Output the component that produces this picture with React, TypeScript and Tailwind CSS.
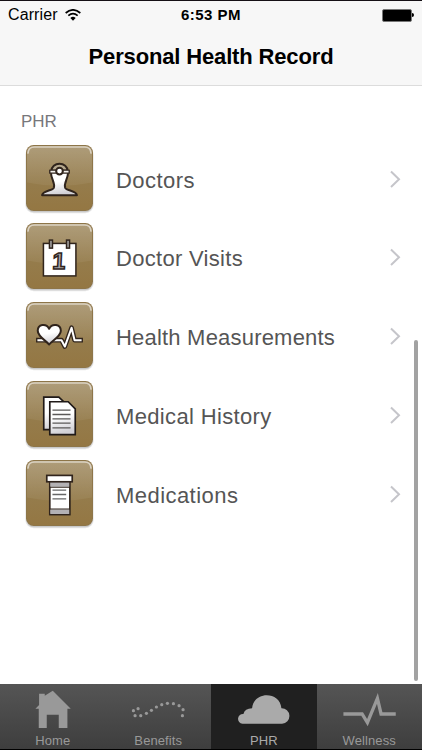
import React from "react";

const DoctorIcon = () => (
  <g stroke="#30241c" strokeWidth="6" strokeLinejoin="round">
    <path d="M74 80 C75 104 88 112 83 128 C79 137 50 136 48 150 H152 C150 136 121 137 117 128 C112 112 125 104 126 80Z" fill="url(#paper)" />
    <path d="M76 77 A24 21 0 0 1 124 77Z" fill="#b5a88e" />
    <path d="M71 75 H129 V84 H71Z" fill="#f4f2ee" strokeWidth="4" />
    <circle cx="100" cy="78" r="10" fill="#fff" />
  </g>
);

const CalendarIcon = () => (
  <g stroke="#30241c" strokeWidth="4.5">
    <rect x="52" y="61" width="97" height="97" fill="#fff" />
    <rect x="70" y="51" width="9" height="24" fill="#a9a7a7" />
    <rect x="121" y="51" width="9" height="24" fill="#a9a7a7" />
    <text x="78" y="138" fontSize="70" fontWeight="700" fontFamily="'Liberation Sans', sans-serif" fill="#aaa8aa" transform="skewX(-3) translate(7 0)">
      1
    </text>
  </g>
);

const HeartIcon = () => (
  <g strokeLinejoin="round" fill="none">
    <path d="M30 114 H106 L116 133 L136 77 L145 114 H170" stroke="#30241c" strokeWidth="14" />
    <path d="M34 114 H106 L116 133 L136 77 L145 114 H166" stroke="#fff" strokeWidth="6" />
    <path d="M69 127 C59 115 35 103 35 86 C35 66 60 62 69 80 C78 62 104 66 104 86 C104 103 79 115 69 127Z" fill="url(#paper)" stroke="#30241c" strokeWidth="6" />
  </g>
);

const HistoryIcon = () => (
  <g stroke="#201a18" strokeWidth="5">
    <path d="M53 48 H98 L113 62 V145 H53Z" fill="url(#paper)" />
    <path d="M71 62 H126 L147 83 V160 H71Z" fill="url(#paper)" />
    <path d="M79 87 H133 M79 100 H133 M79 113 H133 M79 126 H133 M79 140 H133" stroke="#5b5958" strokeWidth="4" />
  </g>
);

const BottleIcon = () => (
  <g stroke="#30241c" strokeWidth="5">
    <rect x="71" y="63" width="60" height="100" fill="#fff" />
    <path d="M73 66 H129 V80 H73Z M73 147 H129 V161 H73Z" fill="#b3b1b4" stroke="none" />
    <path d="M71 81 H131 M71 146 H131" strokeWidth="3" />
    <rect x="62" y="46" width="76" height="19" fill="#fff" />
    <path d="M79 90 H120 M79 103 H120 M79 116 H120" stroke="#666" strokeWidth="4" />
  </g>
);

const Tile = ({ children }: { children: React.ReactNode }) => (
  <svg viewBox="-6 0 212 212" className="h-[71px] w-[71px] shrink-0">
    <rect x="-2" y="5" width="204" height="199" rx="25" fill="#000" opacity="0.1" />
    <rect x="0" y="4" width="200" height="197" rx="24" fill="#000" opacity="0.12" />
    <rect x="0" y="0" width="200" height="197" rx="23" fill="#8d7548" />
    <rect x="3" y="3" width="194" height="191" rx="20" fill="url(#tile)" />
    <path d="M3 23 Q3 3 23 3 H177 Q197 3 197 23 V112 Q100 132 3 112Z" fill="url(#gloss)" />
    <path d="M6 24 Q7 6 25 6 H175 Q193 6 194 24" fill="none" stroke="#fff" strokeOpacity="0.55" strokeWidth="5" strokeLinecap="round" />
    {children}
  </svg>
);

const records = [
  { label: "Doctors", icon: <DoctorIcon />, row: "h-[78px]", spacing: "tracking-[0.45px]" },
  { label: "Doctor Visits", icon: <CalendarIcon />, row: "h-[79px]", spacing: "tracking-[0.3px]" },
  { label: "Health Measurements", icon: <HeartIcon />, row: "h-[79px]", spacing: "tracking-[0.2px]" },
  { label: "Medical History", icon: <HistoryIcon />, row: "h-[79px]", spacing: "tracking-[0.35px]" },
  { label: "Medications", icon: <BottleIcon />, row: "h-[79px]", spacing: "tracking-[0.45px]" },
];

const dots = [
  [400, 104], [414, 98], [405, 119], [422, 119], [439, 112], [454, 103], [469, 93],
  [485, 86], [502, 82], [520, 83], [537, 89], [549, 101], [547, 119],
];

const tabs = [
  {
    label: "Home",
    icon: <path d="M106 98 L117 87 V53 H134 V59 L158 44 L212 98 H202 V156 H176 V116 H140 V156 H116 V98Z" />,
    box: "0 24 316 138",
  },
  {
    label: "Benefits",
    icon: <g>{dots.map(([x, y]) => <circle key={x} cx={x} cy={y} r="4.8" />)}</g>,
    box: "318 24 316 138",
  },
  {
    label: "PHR",
    icon: <path d="M94 143 A14.5 14.5 0 0 1 97 114 Q101 98 123 97 C127 45 207 45 211 97 A23 23 0 0 1 213 143Z" />,
    box: "0 24 316 138",
    active: true,
  },
  {
    label: "Wellness",
    icon: <path d="M395 114 H451 L467 140 L497 67 L508 114 H552" fill="none" stroke="currentColor" strokeWidth="10" />,
    box: "316 24 316 138",
  },
];

export default function App() {
  return (
    <div className="relative flex h-[750px] w-[422px] flex-col overflow-hidden bg-white font-['Liberation_Sans',Arial,sans-serif]">
      <svg className="absolute h-0 w-0">
        <defs>
          <linearGradient id="tile" x1="0" y1="0" x2="0" y2="1">
            <stop offset="0" stopColor="#a08b62" />
            <stop offset="0.55" stopColor="#957c4c" />
            <stop offset="1" stopColor="#947743" />
          </linearGradient>
          <linearGradient id="gloss" x1="0" y1="0" x2="0" y2="1">
            <stop offset="0" stopColor="#fff" stopOpacity="0.15" />
            <stop offset="1" stopColor="#fff" stopOpacity="0.05" />
          </linearGradient>
          <linearGradient id="paper" x1="0" y1="0" x2="0.2" y2="1">
            <stop offset="0.5" stopColor="#fff" />
            <stop offset="1" stopColor="#d2d1d6" />
          </linearGradient>
        </defs>
      </svg>

      <header className="h-[86px] shrink-0 border-t border-b border-t-[#151015] border-b-[#dcdcdc] bg-[#f7f7f7] text-black">
        <div className="grid h-7 grid-cols-3 items-center pr-2 pl-2">
          <div className="flex items-center gap-[7px]">
            <span className="text-[16px] leading-7 tracking-[0.1px]">Carrier</span>
            <svg viewBox="0 0 48 36" className="h-3 w-4" fill="none" stroke="#000" strokeWidth="5">
              <path d="M2 12 Q24 -7 46 12" />
              <path d="M10 20 Q24 8 38 20" />
              <path d="M16 27 Q24 20 32 27 L24 35Z" fill="#000" stroke="none" />
            </svg>
          </div>
          <span className="text-center text-[15px] leading-7 font-bold tracking-[0.5px]">6:53 PM</span>
          <div className="flex items-center justify-end">
            <div className="h-[13px] w-[30px] rounded-[2px] border border-[#777] bg-black" />
            <div className="h-1 w-[2px] rounded-r-full bg-black" />
          </div>
        </div>
        <h1 className="text-center text-[22px] leading-[55px] font-bold tracking-[-0.15px]">Personal Health Record</h1>
      </header>

      <main className="flex-1 pt-[24px]">
        <h2 className="h-[35px] pl-[21px] text-[17px] leading-[24px] text-[#77777b]">PHR</h2>
        <ul>
          {records.map((item) => (
            <li key={item.label} className={`flex items-start pl-6 ${item.row}`}>
              <Tile>{item.icon}</Tile>
              <span className={`ml-[21px] flex-1 text-[22px] leading-[72px] whitespace-nowrap text-[#555] ${item.spacing}`}>{item.label}</span>
              <svg viewBox="0 0 12 18" className="mt-[25px] mr-[21px] h-[18px] w-3" fill="none" stroke="#c5c5ca" strokeWidth="2">
                <path d="M2 1.5 L10 9.3 L2 17" />
              </svg>
            </li>
          ))}
        </ul>
      </main>

      <div className="absolute top-[340px] left-[414px] h-[341px] w-[4px] rounded-full bg-[#a2a2a2]" />

      <nav className="grid h-[66px] shrink-0 grid-cols-4 border-b border-black">
        {tabs.map((tab) => (
          <div
            key={tab.label}
            className={`flex flex-col items-center ${
              tab.active ? "bg-[#202020] text-[#aaa]" : "bg-gradient-to-b from-[#555] to-[#3e3e3e] text-[#999]"
            }`}
          >
            <svg viewBox={tab.box} className="h-[46px] w-full shrink-0" fill="currentColor">
              {tab.icon}
            </svg>
            <span className="mt-[3px] text-[13px] leading-4 tracking-[0.1px]">{tab.label}</span>
          </div>
        ))}
      </nav>
    </div>
  );
}
